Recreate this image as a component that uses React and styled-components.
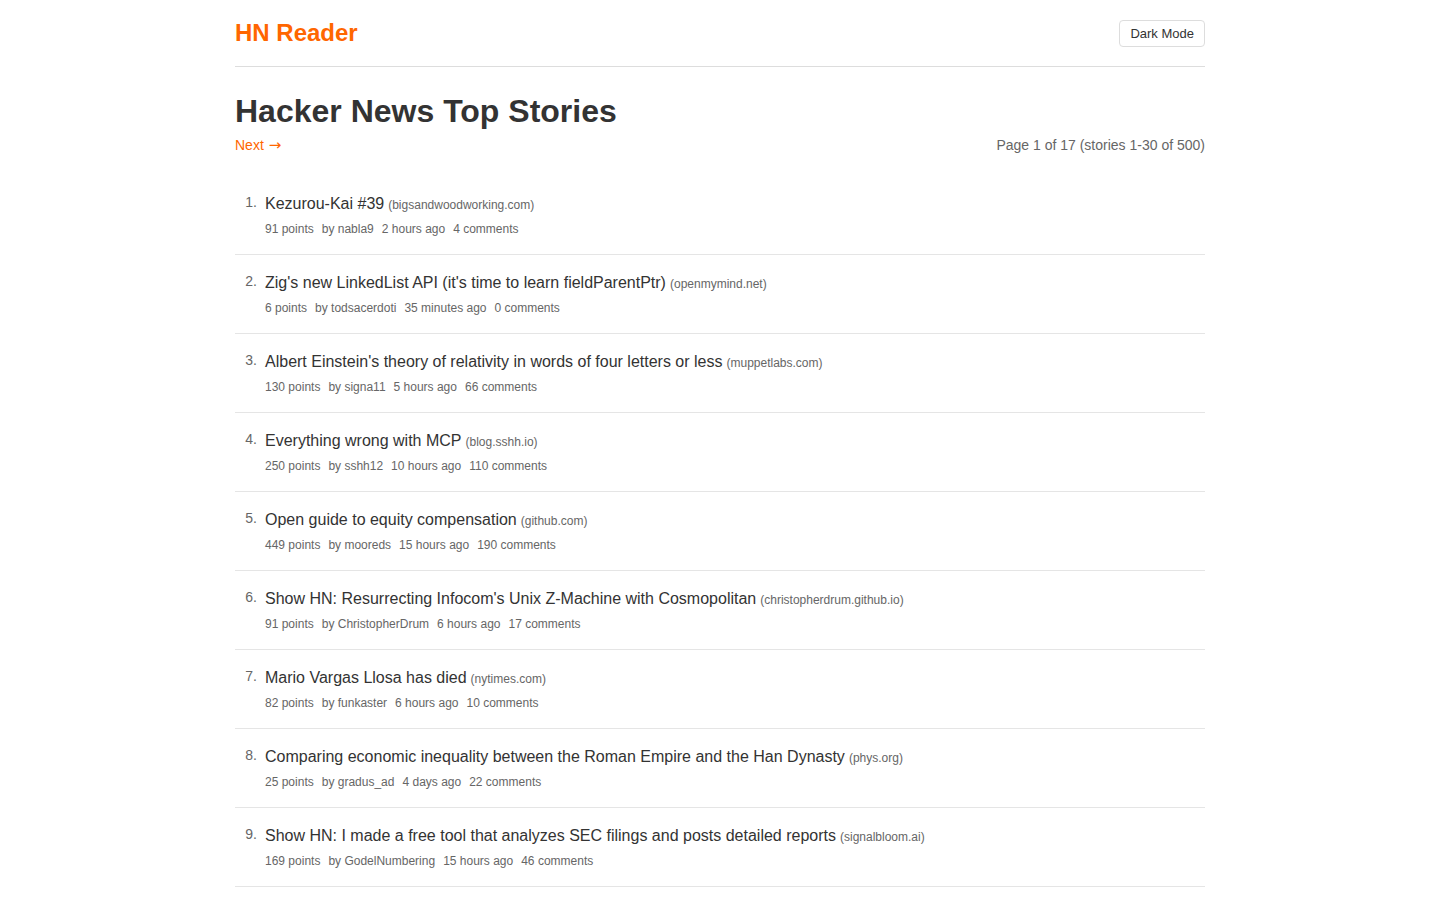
import React from "react";
import styled, { createGlobalStyle } from "styled-components";

const GlobalStyle = createGlobalStyle`
  body {
    margin: 0;
    background: #fff;
    font-family: "Liberation Sans", Arial, sans-serif;
    color: #333;
  }
`;

const Container = styled.div`
  max-width: 970px;
  margin: 0 auto;
`;

const Header = styled.header`
  display: flex;
  align-items: center;
  justify-content: space-between;
  height: 66px;
  border-bottom: 1px solid #ddd;
`;

const Logo = styled.a`
  font-size: 24px;
  font-weight: bold;
  color: #ff6600;
  text-decoration: none;
`;

const ThemeButton = styled.button`
  font-family: inherit;
  font-size: 13px;
  color: #333;
  background: #fff;
  border: 1px solid #ddd;
  border-radius: 4px;
  padding: 0 10px;
  height: 27px;
  cursor: pointer;
`;

const Title = styled.h1`
  font-size: 32px;
  font-weight: bold;
  margin: 24px 0 4px;
  line-height: 40px;
`;

const Pager = styled.div`
  display: flex;
  justify-content: space-between;
  align-items: center;
  font-size: 14px;
  line-height: 20px;
  margin-bottom: 21px;
`;

const NextLink = styled.a`
  color: #ff6600;
  text-decoration: none;
`;

const Arrow = styled.span`
  font-family: "DejaVu Sans", sans-serif;
  font-size: 15px;
  margin-left: 1px;
`;

const PageInfo = styled.span`
  color: #666;
`;

const List = styled.ol`
  list-style: none;
  margin: 0;
  padding: 0;
`;

const Item = styled.li`
  display: flex;
  padding: 16px 0;
  border-bottom: 1px solid #e5e5e5;
`;

const Rank = styled.span`
  min-width: 22px;
  text-align: right;
  margin-right: 8px;
  font-size: 14px;
  line-height: 21px;
  color: #666;
`;

const Body = styled.div`
  display: flex;
  flex-direction: column;
`;

const StoryLine = styled.div`
  line-height: 24px;
`;

const StoryLink = styled.a`
  font-size: 16px;
  color: #333;
  text-decoration: none;
`;

const Domain = styled.span`
  font-size: 12px;
  color: #666;
  margin-left: 4px;
`;

const Meta = styled.div`
  display: flex;
  gap: 8px;
  font-size: 12px;
  line-height: 18px;
  color: #666;
  margin-top: 3px;
`;

const stories = [
  ["Kezurou-Kai #39", "bigsandwoodworking.com", 91, "nabla9", "2 hours ago", 4],
  ["Zig's new LinkedList API (it's time to learn fieldParentPtr)", "openmymind.net", 6, "todsacerdoti", "35 minutes ago", 0],
  ["Albert Einstein's theory of relativity in words of four letters or less", "muppetlabs.com", 130, "signa11", "5 hours ago", 66],
  ["Everything wrong with MCP", "blog.sshh.io", 250, "sshh12", "10 hours ago", 110],
  ["Open guide to equity compensation", "github.com", 449, "mooreds", "15 hours ago", 190],
  ["Show HN: Resurrecting Infocom's Unix Z-Machine with Cosmopolitan", "christopherdrum.github.io", 91, "ChristopherDrum", "6 hours ago", 17],
  ["Mario Vargas Llosa has died", "nytimes.com", 82, "funkaster", "6 hours ago", 10],
  ["Comparing economic inequality between the Roman Empire and the Han Dynasty", "phys.org", 25, "gradus_ad", "4 days ago", 22],
  ["Show HN: I made a free tool that analyzes SEC filings and posts detailed reports", "signalbloom.ai", 169, "GodelNumbering", "15 hours ago", 46],
];

export default function App() {
  return (
    <>
      <GlobalStyle />
      <Container>
        <Header>
          <Logo href="#">HN Reader</Logo>
          <ThemeButton>Dark Mode</ThemeButton>
        </Header>
        <Title>Hacker News Top Stories</Title>
        <Pager>
          <NextLink href="#">
            Next <Arrow>→</Arrow>
          </NextLink>
          <PageInfo>Page 1 of 17 (stories 1-30 of 500)</PageInfo>
        </Pager>
        <List>
          {stories.map(([title, domain, points, by, time, comments], i) => (
            <Item key={i}>
              <Rank>{i + 1}.</Rank>
              <Body>
                <StoryLine>
                  <StoryLink href="#">{title}</StoryLink>
                  <Domain>({domain})</Domain>
                </StoryLine>
                <Meta>
                  <span>{points} points</span>
                  <span>by {by}</span>
                  <span>{time}</span>
                  <span>{comments} comments</span>
                </Meta>
              </Body>
            </Item>
          ))}
        </List>
      </Container>
    </>
  );
}
